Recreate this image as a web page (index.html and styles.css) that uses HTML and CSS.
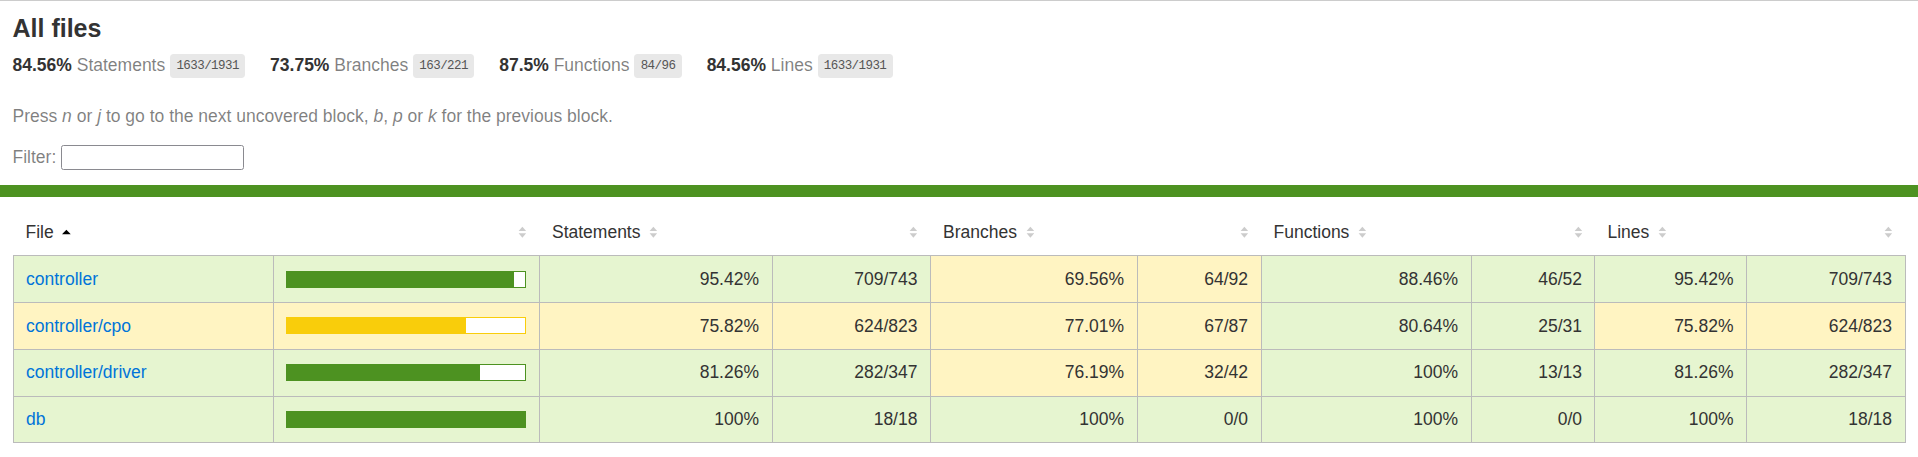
FILE: index.html
```
<!doctype html>
<html lang="en">
<head>
<meta charset="utf-8">
<title>Code coverage report for All files</title>
<link rel="stylesheet" href="styles.css">
</head>
<body>
<div class="topline"></div>
<div class="wrapper">
  <div class="pad1">
    <h1>All files</h1>
    <div class="clearfix">
      <div class="fl pad1y space-right2">
        <span class="strong">84.56% </span>
        <span class="quiet">Statements</span>
        <span class="fraction">1633/1931</span>
      </div>
      <div class="fl pad1y space-right2">
        <span class="strong">73.75% </span>
        <span class="quiet">Branches</span>
        <span class="fraction">163/221</span>
      </div>
      <div class="fl pad1y space-right2">
        <span class="strong">87.5% </span>
        <span class="quiet">Functions</span>
        <span class="fraction">84/96</span>
      </div>
      <div class="fl pad1y space-right2">
        <span class="strong">84.56% </span>
        <span class="quiet">Lines</span>
        <span class="fraction">1633/1931</span>
      </div>
    </div>
    <p class="quiet">
      Press <em>n</em> or <em>j</em> to go to the next uncovered block, <em>b</em>, <em>p</em> or <em>k</em> for the previous block.
    </p>
    <div class="quiet filter">
      Filter:
      <input type="search" id="fileSearch" class="search">
    </div>
  </div>
  <div class="status-line high"></div>
  <div class="pad1">
    <table class="coverage-summary">
      <thead>
        <tr>
          <th class="file sorted">File<span class="sorter"><svg viewBox="0 0 7 10" width="7" height="10"><polygon points="0,6.5 3.5,3 7,6.5" fill="#000"/></svg></span></th>
          <th class="pic"><span class="sorter"><svg viewBox="0 0 7 10" width="7" height="10"><polygon points="0.5,4 3.5,0.5 6.5,4" fill="#ccc"/><polygon points="0.5,5.8 6.5,5.8 3.5,9.3" fill="#ccc"/></svg></span></th>
          <th class="pct">Statements<span class="sorter"><svg viewBox="0 0 7 10" width="7" height="10"><polygon points="0.5,4 3.5,0.5 6.5,4" fill="#ccc"/><polygon points="0.5,5.8 6.5,5.8 3.5,9.3" fill="#ccc"/></svg></span></th>
          <th class="abs"><span class="sorter"><svg viewBox="0 0 7 10" width="7" height="10"><polygon points="0.5,4 3.5,0.5 6.5,4" fill="#ccc"/><polygon points="0.5,5.8 6.5,5.8 3.5,9.3" fill="#ccc"/></svg></span></th>
          <th class="pct">Branches<span class="sorter"><svg viewBox="0 0 7 10" width="7" height="10"><polygon points="0.5,4 3.5,0.5 6.5,4" fill="#ccc"/><polygon points="0.5,5.8 6.5,5.8 3.5,9.3" fill="#ccc"/></svg></span></th>
          <th class="abs"><span class="sorter"><svg viewBox="0 0 7 10" width="7" height="10"><polygon points="0.5,4 3.5,0.5 6.5,4" fill="#ccc"/><polygon points="0.5,5.8 6.5,5.8 3.5,9.3" fill="#ccc"/></svg></span></th>
          <th class="pct">Functions<span class="sorter"><svg viewBox="0 0 7 10" width="7" height="10"><polygon points="0.5,4 3.5,0.5 6.5,4" fill="#ccc"/><polygon points="0.5,5.8 6.5,5.8 3.5,9.3" fill="#ccc"/></svg></span></th>
          <th class="abs"><span class="sorter"><svg viewBox="0 0 7 10" width="7" height="10"><polygon points="0.5,4 3.5,0.5 6.5,4" fill="#ccc"/><polygon points="0.5,5.8 6.5,5.8 3.5,9.3" fill="#ccc"/></svg></span></th>
          <th class="pct">Lines<span class="sorter"><svg viewBox="0 0 7 10" width="7" height="10"><polygon points="0.5,4 3.5,0.5 6.5,4" fill="#ccc"/><polygon points="0.5,5.8 6.5,5.8 3.5,9.3" fill="#ccc"/></svg></span></th>
          <th class="abs"><span class="sorter"><svg viewBox="0 0 7 10" width="7" height="10"><polygon points="0.5,4 3.5,0.5 6.5,4" fill="#ccc"/><polygon points="0.5,5.8 6.5,5.8 3.5,9.3" fill="#ccc"/></svg></span></th>
        </tr>
      </thead>
      <tbody>
        <tr>
          <td class="file high"><a href="#">controller</a></td>
          <td class="pic high"><div class="chart"><div class="cover-fill" style="width: 95%"></div><div class="cover-empty" style="width: 5%"></div></div></td>
          <td class="pct high">95.42%</td>
          <td class="abs high">709/743</td>
          <td class="pct medium">69.56%</td>
          <td class="abs medium">64/92</td>
          <td class="pct high">88.46%</td>
          <td class="abs high">46/52</td>
          <td class="pct high">95.42%</td>
          <td class="abs high">709/743</td>
        </tr>
        <tr>
          <td class="file medium"><a href="#">controller/cpo</a></td>
          <td class="pic medium"><div class="chart"><div class="cover-fill" style="width: 75%"></div><div class="cover-empty" style="width: 25%"></div></div></td>
          <td class="pct medium">75.82%</td>
          <td class="abs medium">624/823</td>
          <td class="pct medium">77.01%</td>
          <td class="abs medium">67/87</td>
          <td class="pct high">80.64%</td>
          <td class="abs high">25/31</td>
          <td class="pct medium">75.82%</td>
          <td class="abs medium">624/823</td>
        </tr>
        <tr>
          <td class="file high"><a href="#">controller/driver</a></td>
          <td class="pic high"><div class="chart"><div class="cover-fill" style="width: 81%"></div><div class="cover-empty" style="width: 19%"></div></div></td>
          <td class="pct high">81.26%</td>
          <td class="abs high">282/347</td>
          <td class="pct medium">76.19%</td>
          <td class="abs medium">32/42</td>
          <td class="pct high">100%</td>
          <td class="abs high">13/13</td>
          <td class="pct high">81.26%</td>
          <td class="abs high">282/347</td>
        </tr>
        <tr>
          <td class="file high"><a href="#">db</a></td>
          <td class="pic high"><div class="chart"><div class="cover-fill cover-full" style="width: 100%"></div><div class="cover-empty" style="width: 0%"></div></div></td>
          <td class="pct high">100%</td>
          <td class="abs high">18/18</td>
          <td class="pct high">100%</td>
          <td class="abs high">0/0</td>
          <td class="pct high">100%</td>
          <td class="abs high">0/0</td>
          <td class="pct high">100%</td>
          <td class="abs high">18/18</td>
        </tr>
      </tbody>
    </table>
  </div>
</div>
</body>
</html>
```
FILE: styles.css
```
html, body { margin: 0; padding: 0; height: 100%; }
body {
  font-family: "Liberation Sans", Arial, Helvetica, sans-serif;
  font-size: 14px;
  color: #333;
  zoom: 1.25;
}
*, *:after, *:before { box-sizing: border-box; }
.topline { height: 0.8px; background: #ccc; }
h1 { font-size: 20px; margin: 0; }
a { color: #0074D9; text-decoration: none; }
.strong { font-weight: bold; }
.pad1y { padding: 10px 0; }
.pad1 { padding: 10px; }
.space-right2 { padding-right: 20px; }
.clearfix { display: block; }
.clearfix:after { content: ''; display: block; height: 0; clear: both; visibility: hidden; }
.fl { float: left; }
.quiet { color: rgba(0,0,0,0.5); }
.fraction {
  font-family: Consolas, "Liberation Mono", Menlo, Courier, monospace;
  font-size: 10px;
  letter-spacing: -0.45px;
  color: #555;
  background: #E8E8E8;
  padding: 4px 5px;
  border-radius: 3px;
  vertical-align: middle;
}
.filter { height: 22px; line-height: 20px; }
.search {
  width: 146px;
  height: 20.5px;
  border: 1px solid #8a8a90;
  border-radius: 2px;
  margin: 0;
  vertical-align: top;
}
.coverage-summary { border-collapse: collapse; width: 100%; }
.coverage-summary tr { border-bottom: 1px solid #bbb; }
.coverage-summary td, .coverage-summary th { padding: 10px; line-height: 16.6px; }
.coverage-summary tbody { border: 1px solid #bbb; }
.coverage-summary td { border-right: 1px solid #bbb; }
.coverage-summary td:last-child { border-right: none; }
.coverage-summary th { text-align: left; font-weight: normal; white-space: nowrap; }
.coverage-summary th.file { border-right: none; }
.coverage-summary th.pic,
.coverage-summary th.abs,
.coverage-summary td.pct,
.coverage-summary td.abs { text-align: right; }
.coverage-summary td.file { white-space: nowrap; }
.coverage-summary td.pic { min-width: 120px; }
.coverage-summary .sorter {
  height: 10px;
  width: 7px;
  display: inline-block;
  margin-left: 0.5em;
}
.coverage-summary .sorter svg { display: block; }
.status-line { height: 10px; }
.high { background: rgb(230,245,208); }
.status-line.high, .high .cover-fill { background: rgb(77,146,33); }
.high .chart { border: 1px solid rgb(77,146,33); }
.status-line.medium, .medium .cover-fill { background: #f9cd0b; }
.medium .chart { border: 1px solid #f9cd0b; }
.medium { background: #fff4c2; }
.cover-fill, .cover-empty { display: inline-block; height: 12px; }
.chart { line-height: 0; }
.cover-empty { background: white; }
.cover-full { border-right: none; }
```
